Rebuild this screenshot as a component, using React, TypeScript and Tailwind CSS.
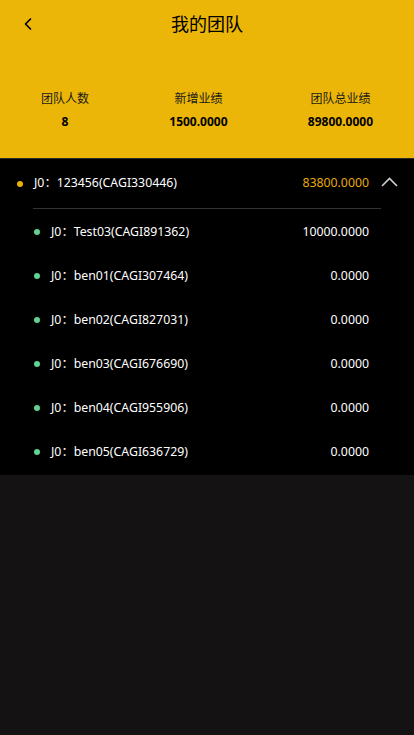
import { ChevronLeft } from "lucide-react";

const members = [
  { name: "J0：Test03(CAGI891362)", amount: "10000.0000" },
  { name: "J0：ben01(CAGI307464)", amount: "0.0000" },
  { name: "J0：ben02(CAGI827031)", amount: "0.0000" },
  { name: "J0：ben03(CAGI676690)", amount: "0.0000" },
  { name: "J0：ben04(CAGI955906)", amount: "0.0000" },
  { name: "J0：ben05(CAGI636729)", amount: "0.0000" },
];

const stats = [
  { label: "团队人数", value: "8" },
  { label: "新增业绩", value: "1500.0000" },
  { label: "团队总业绩", value: "89800.0000" },
];

export default function App() {
  return (
    <div
      className="min-h-[735px] w-[414px] bg-[#141213]"
      style={{ fontFamily: '"Noto Sans", "Noto Sans CJK SC", sans-serif' }}
    >
      {/* 顶部黄色区域 */}
      <div className="h-[159px] bg-[#ebb607] border-b border-[#2a2a2a]">
        <div className="relative flex h-[48px] items-center justify-center">
          <ChevronLeft className="absolute left-[18px] top-[14px] h-5 w-5 text-black" strokeWidth={2} />
          <span className="text-[18px] text-black">我的团队</span>
        </div>
        <div className="mt-[43px] flex justify-between px-[41px]">
          {stats.map((s) => (
            <div key={s.label} className="flex flex-col items-center">
              <span className="text-[12px] leading-[16px] text-[#1a1a1a]">{s.label}</span>
              <span className="mt-[7px] text-[12px] font-bold leading-[16px] text-black">{s.value}</span>
            </div>
          ))}
        </div>
      </div>

      {/* 团队列表 */}
      <div className="bg-black pb-[1px]">
        <div className="flex h-[49px] items-center pl-[17px] pr-[16px]">
          <span className="h-[6px] w-[6px] rounded-full bg-[#e6b400]" />
          <span className="ml-[11px] flex-1 text-[12.3px] text-white">J0：123456(CAGI330446)</span>
          <span className="text-[12.3px] text-[#e8a90a]">83800.0000</span>
          <svg className="ml-[12px] mb-[3px]" width="17" height="10" viewBox="0 0 17 10" fill="none">
            <polyline points="1,9 8.5,1.5 16,9" stroke="#d0d0d0" strokeWidth="1.6" />
          </svg>
        </div>
        <div className="mx-[33px] h-px bg-[#333333]" />
        <div className="pt-[1px]">
          {members.map((m) => (
            <div key={m.name} className="flex h-[44px] items-center pl-[34px] pr-[45px]">
              <span className="h-[6px] w-[6px] rounded-full bg-[#5fd38f]" />
              <span className="ml-[11px] flex-1 text-[12.3px] text-white">{m.name}</span>
              <span className="text-[12.3px] text-white">{m.amount}</span>
            </div>
          ))}
        </div>
      </div>
    </div>
  );
}
